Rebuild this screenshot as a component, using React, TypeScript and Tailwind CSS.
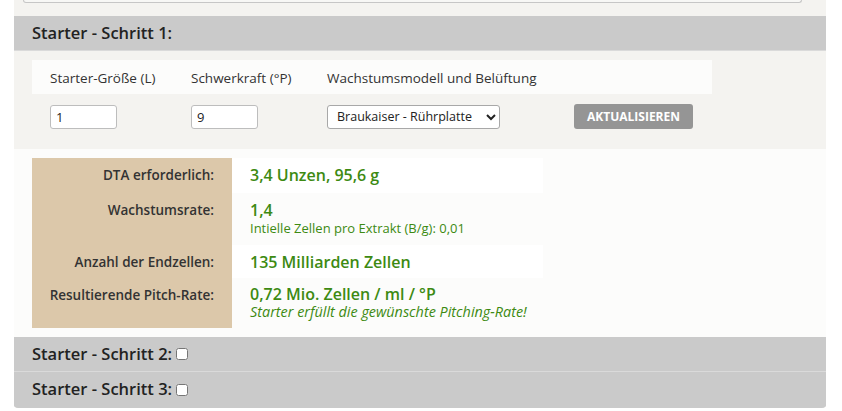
import React from "react";

const green = "text-[#3d8a12]";

type ResultRowProps = {
  label: string;
  height: string;
  shaded?: boolean;
  children: React.ReactNode;
};

const ResultRow = ({ label, height, shaded = false, children }: ResultRowProps) => {
  return (
    <div className={"flex " + height}>
      <div className="w-[200px] shrink-0 bg-[#dcc8aa] pr-[18px] pt-[7px] text-right text-[13.5px] font-semibold leading-[20px] text-[#333]">
        {label}
      </div>
      <div className={"w-[311px] pl-[18px] pt-[7px] " + (shaded ? "bg-[#fcfcfb]" : "bg-white")}>{children}</div>
    </div>
  );
};

const StepHeader = ({ text, checkbox = false, border = false }: { text: string; checkbox?: boolean; border?: boolean }) => {
  return (
    <div
      className={
        "flex h-[35px] items-center gap-[4px] bg-[#cacaca] pl-[18px] text-[16.5px] font-semibold text-[#222] " +
        (border ? "border-b border-[#dadada]" : "")
      }
    >
      <span>{text}</span>
      {checkbox && <input type="checkbox" className="h-[12px] w-[12px] accent-white" />}
    </div>
  );
};

export default function App() {
  return (
    <div className="h-[411px] w-[842px] overflow-hidden bg-white font-['Open_Sans',sans-serif]">
      <div className="ml-[14px] w-[812px] rounded-b-[4px] bg-[#f4f3f0]">
        {/* end of the box above */}
        <div className="h-[16px] px-[9px]">
          <div className="h-[3px] w-[779px] rounded-b-[3px] border border-t-0 border-[#c6c6c6] bg-[#f7f7f5]"></div>
        </div>

        <StepHeader text="Starter - Schritt 1:" border />

        {/* form */}
        <div className="px-[18px] pt-[9px] pb-[20px]">
          <div className="grid h-[34px] w-[680px] grid-cols-[141px_137px_246px_156px] items-center bg-[#fcfcfb] pt-[2px] text-[13.5px] text-[#333]">
            <div className="pl-[18px]">Starter-Größe (L)</div>
            <div className="pl-[18px]">Schwerkraft (°P)</div>
            <div className="pl-[17px]">Wachstumsmodell und Belüftung</div>
            <div></div>
          </div>
          <div className="mt-[10px] grid h-[25px] w-[680px] grid-cols-[141px_137px_246px_156px] items-center text-[13px] text-[#222]">
            <div className="pl-[18px]">
              <input
                defaultValue="1"
                className="h-[24px] w-[67px] rounded-[3px] border border-[#bdbdbd] bg-white px-[5px] text-[13px] outline-none"
              />
            </div>
            <div className="pl-[18px]">
              <input
                defaultValue="9"
                className="h-[24px] w-[67px] rounded-[3px] border border-[#bdbdbd] bg-white px-[5px] text-[13px] outline-none"
              />
            </div>
            <div className="pl-[17px]">
              <select className="h-[24px] w-[173px] rounded-[3px] border border-[#a8a8a8] bg-white pl-[5px] text-[12.5px]">
                <option>Braukaiser - Rührplatte</option>
              </select>
            </div>
            <div className="pl-[18px]">
              <button className="h-[25px] w-[119px] rounded-[3px] bg-[#959595] text-[12px] font-bold text-white">
                AKTUALISIEREN
              </button>
            </div>
          </div>
        </div>

        {/* results */}
        <div className="bg-[#fcfcfb] px-[18px] py-[9px]">
          <div className="w-[511px]">
            <ResultRow label="DTA erforderlich:" height="h-[35px]">
              <div className={"text-[16px] font-semibold leading-[20px] " + green}>3,4 Unzen, 95,6 g</div>
            </ResultRow>
            <ResultRow label="Wachstumsrate:" height="h-[52px]" shaded>
              <div className={"text-[16px] font-semibold leading-[20px] " + green}>1,4</div>
              <div className={"text-[13px] leading-[17px] " + green}>Intielle Zellen pro Extrakt (B/g): 0,01</div>
            </ResultRow>
            <ResultRow label="Anzahl der Endzellen:" height="h-[33px]">
              <div className={"text-[16px] font-semibold leading-[20px] " + green}>135 Milliarden Zellen</div>
            </ResultRow>
            <ResultRow label="Resultierende Pitch-Rate:" height="h-[50px]" shaded>
              <div className={"text-[16px] font-semibold leading-[18px] " + green}>0,72 Mio. Zellen / ml / °P</div>
              <div className={"text-[14.4px] italic leading-[17px] " + green}>Starter erfüllt die gewünschte Pitching-Rate!</div>
            </ResultRow>
          </div>
        </div>

        <StepHeader text="Starter - Schritt 2:" checkbox border />
        <div className="h-[36px] overflow-hidden rounded-b-[4px] bg-[#cacaca]">
          <StepHeader text="Starter - Schritt 3:" checkbox />
        </div>
      </div>
    </div>
  );
}
